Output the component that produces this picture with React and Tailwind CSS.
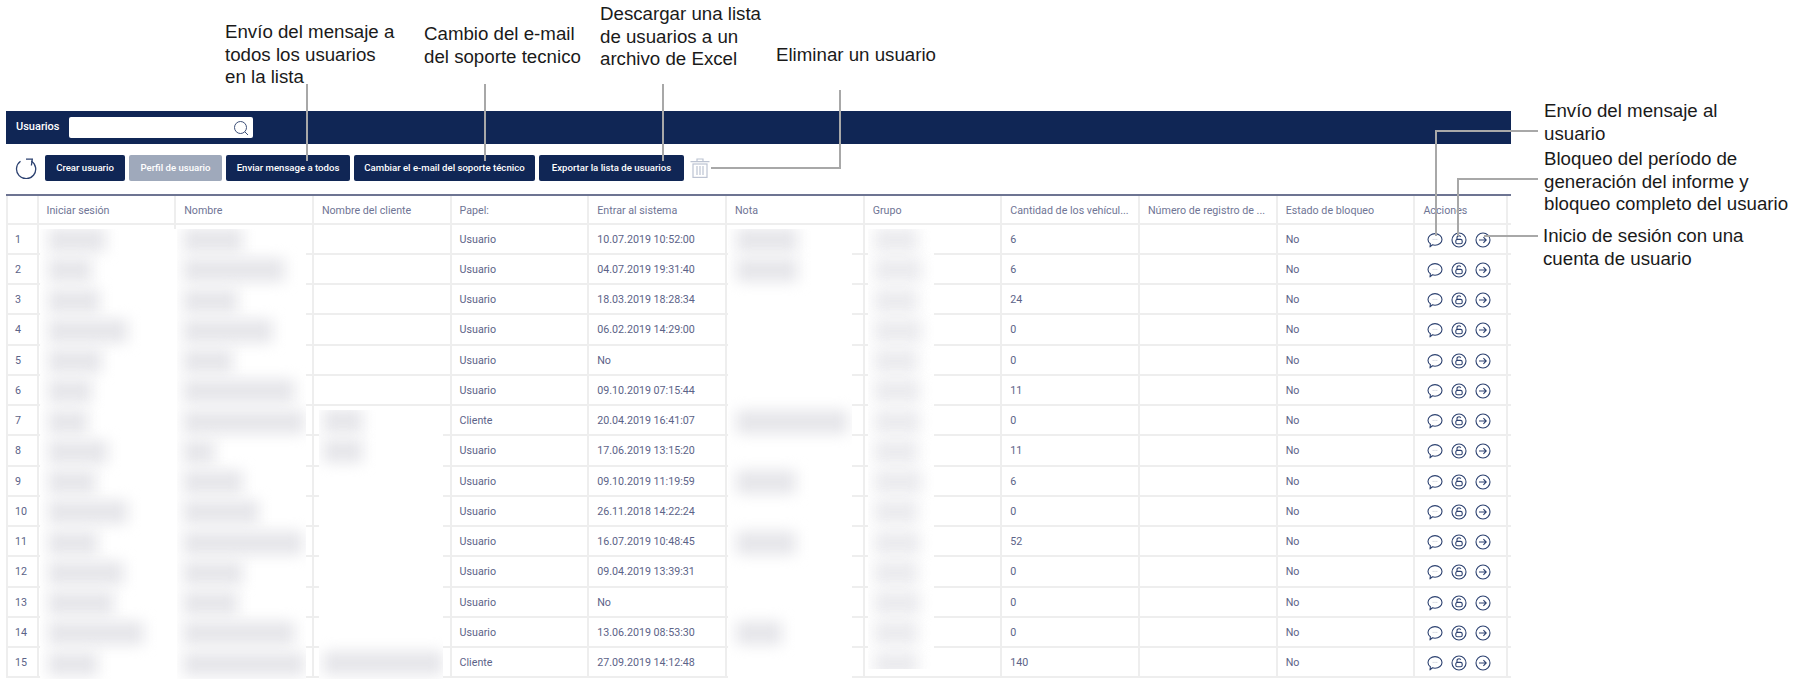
import React from "react";

const rows = [
  ["Usuario", "10.07.2019 10:52:00", "6"],
  ["Usuario", "04.07.2019 19:31:40", "6"],
  ["Usuario", "18.03.2019 18:28:34", "24"],
  ["Usuario", "06.02.2019 14:29:00", "0"],
  ["Usuario", "No", "0"],
  ["Usuario", "09.10.2019 07:15:44", "11"],
  ["Cliente", "20.04.2019 16:41:07", "0"],
  ["Usuario", "17.06.2019 13:15:20", "11"],
  ["Usuario", "09.10.2019 11:19:59", "6"],
  ["Usuario", "26.11.2018 14:22:24", "0"],
  ["Usuario", "16.07.2019 10:48:45", "52"],
  ["Usuario", "09.04.2019 13:39:31", "0"],
  ["Usuario", "No", "0"],
  ["Usuario", "13.06.2019 08:53:30", "0"],
  ["Cliente", "27.09.2019 14:12:48", "140"],
];

const headers = [
  "", "Iniciar sesión", "Nombre", "Nombre del cliente", "Papel:", "Entrar al sistema", "Nota", "Grupo",
  "Cantidad de los vehícul...", "Número de registro de ...", "Estado de bloqueo", "Acciones",
];

const gridCols = "grid grid-cols-[30.5px_repeat(10,137.7px)_92.5px]";

function ChatIcon() {
  return (
    <svg width="16" height="16" viewBox="0 0 16 16" fill="none" stroke="#2c4170" strokeWidth="1.100">
      <path d="M8 1.600c3.900 0 7 2.600 7 5.800s-3.100 5.800-7 5.800c-.9 0-1.700-.1-2.500-.4L3 14.800l.4-3C1.900 10.800 1 9.200 1 7.400 1 4.200 4.100 1.600 8 1.600z" strokeLinejoin="round" />
      <path d="M5.800 7.400h.6M7.700 7.400h.6M9.600 7.400h.6" stroke="#9aa3b8" strokeWidth="1" />
    </svg>
  );
}

function LockIcon() {
  return (
    <svg width="16" height="16" viewBox="0 0 16 16" fill="none" stroke="#2c4170" strokeWidth="1.100">
      <circle cx="8" cy="8" r="7" />
      <rect x="4.800" y="7.400" width="6.400" height="4.400" rx="1.600" />
      <path d="M6 7.400V5.600C6 4.500 6.900 3.800 8 3.800c.8 0 1.400.3 1.800.9" />
    </svg>
  );
}

function ArrowIcon() {
  return (
    <svg width="16" height="16" viewBox="0 0 16 16" fill="none" stroke="#2c4170" strokeWidth="1.100">
      <circle cx="8" cy="8" r="7" />
      <path d="M4 8h7M8.400 5.200 11.200 8l-2.800 2.800" />
    </svg>
  );
}

function SearchGlyph() {
  return (
    <svg width="16" height="16" viewBox="0 0 16 16" fill="none" stroke="#3d4f78" strokeWidth="1">
      <circle cx="7.500" cy="7.500" r="6" />
      <path d="M11.800 11.800 15 15" />
    </svg>
  );
}

function RefreshGlyph() {
  return (
    <svg width="22" height="22" viewBox="0 0 22 22" fill="none" stroke="#2c4170" strokeWidth="1.300">
      <path d="M5.500 4.300A9.600 9.600 0 1 0 16.300 4" />
      <path d="M11 2.200h6.300l-.9 6.300" />
    </svg>
  );
}

function TrashGlyph() {
  return (
    <svg width="20" height="20" viewBox="0 0 20 20" fill="none" stroke="#bcc3d2" strokeWidth="1.200">
      <path d="M0.500 3.700h19M7 3.500V1h6v2.500" />
      <rect x="3" y="6" width="14" height="13.400" />
      <path d="M7 8v9M10 8v9M13 8v9" />
    </svg>
  );
}

function Button({ children, muted }) {
  return (
    <div
      className={
        "flex h-[26px] items-center rounded-[2px] text-[9.600px] font-medium text-white " +
        (muted ? "bg-[#9fa9bb] text-[#e6e9ef]" : "bg-[#102655]")
      }
    >
      {children}
    </div>
  );
}

function Patch({ className, widths, blobLeft }) {
  return (
    <div className={"absolute overflow-hidden bg-white " + className}>
      <div className="-mt-[4px] flex flex-col">
        {widths.map((w, i) => (
          <div key={i} className="flex h-[30.250px] shrink-0 items-center">
            {w > 0 && (
              <div
                className={"h-[24px] bg-[#e6e6ea] blur-[7px] " + blobLeft}
                style={{ width: w }}
              />
            )}
          </div>
        ))}
      </div>
    </div>
  );
}

function Note({ className, children }) {
  return (
    <div
      className={
        "absolute whitespace-nowrap font-['Liberation_Sans',Arial,sans-serif] text-[18.700px] leading-[22.700px] text-[#1a1a1a] " +
        className
      }
    >
      {children}
    </div>
  );
}

function Line({ className }) {
  return <div className={"absolute bg-[#a8a8a8] " + className} />;
}

export default function App() {
  return (
    <div className="relative h-[679px] w-[1795px] overflow-hidden bg-white pl-[6px] pt-[111px] font-['Roboto',sans-serif]">
      <div className="flex h-[33px] w-[1505px] items-center gap-[9px] bg-[#102655] pl-[10px]">
        <span className="text-[11px] font-medium text-white">Usuarios</span>
        <div className="flex h-[21px] w-[184px] items-center justify-end rounded-[2px] bg-white pr-[4px]">
          <SearchGlyph />
        </div>
      </div>

      <div className="mt-[11px] flex h-[26px] items-center">
        <div className="ml-[9px] mr-[8px] flex w-[22px] justify-center">
          <RefreshGlyph />
        </div>
        <div className="flex gap-[4px]">
          <div className="w-[80px]"><Button><span className="w-full text-center">Crear usuario</span></Button></div>
          <div className="w-[93px]"><Button muted><span className="w-full text-center">Perfil de usuario</span></Button></div>
          <div className="w-[124px]"><Button><span className="w-full text-center">Enviar mensage a todos</span></Button></div>
          <div className="w-[181px]"><Button><span className="w-full text-center">Cambiar el e-mail del soporte técnico</span></Button></div>
          <div className="w-[145px]"><Button><span className="w-full text-center">Exportar la lista de usuarios</span></Button></div>
        </div>
        <div className="ml-[6px]"><TrashGlyph /></div>
      </div>

      <div className="relative mt-[13px] w-[1505px] text-[10.700px] text-[#5c6388]">
        <div className="h-[30.500px] border-b-2 border-t-2 border-b-[#eeeeee] border-t-[#6d7492]">
          <div className={gridCols + " h-full border-l-2 border-[#eeeeee]"}>
            {headers.map((h, i) => (
              <div
                key={i}
                className="flex items-center overflow-hidden whitespace-nowrap border-r-2 border-[#eeeeee] pl-[8px] pt-[3px] text-[#6f7595]"
              >
                {h}
              </div>
            ))}
          </div>
        </div>
        {rows.map((r, i) => (
          <div key={i} className={gridCols + " h-[30.250px] border-b-2 border-l-2 border-[#eeeeee]"}>
            <div className="flex items-center border-r-2 border-[#eeeeee] pl-[7px] pt-[2px]">{i + 1}</div>
            <div className="border-r-2 border-[#eeeeee]" />
            <div className="border-r-2 border-[#eeeeee]" />
            <div className="border-r-2 border-[#eeeeee]" />
            <div className="flex items-center border-r-2 border-[#eeeeee] pl-[8px] pt-[2px]">{r[0]}</div>
            <div className="flex items-center border-r-2 border-[#eeeeee] pl-[8px] pt-[2px]">{r[1]}</div>
            <div className="border-r-2 border-[#eeeeee]" />
            <div className="border-r-2 border-[#eeeeee]" />
            <div className="flex items-center border-r-2 border-[#eeeeee] pl-[8px] pt-[2px]">{r[2]}</div>
            <div className="border-r-2 border-[#eeeeee]" />
            <div className="flex items-center border-r-2 border-[#eeeeee] pl-[8px] pt-[2px]">No</div>
            <div className="flex items-center gap-[8px] border-r-2 border-[#eeeeee] pl-[12px] pt-[2px]">
              <ChatIcon />
              <LockIcon />
              <ArrowIcon />
            </div>
          </div>
        ))}

        <Patch
          className="left-[34px] top-[35px] h-[450px] w-[137px]"
          blobLeft="ml-[8px]"
          widths={[58, 44, 52, 80, 54, 44, 40, 60, 48, 80, 50, 76, 66, 96, 50]}
        />
        <Patch
          className="left-[171px] top-[35px] h-[450px] w-[129px]"
          blobLeft="ml-[6px]"
          widths={[60, 102, 55, 90, 50, 112, 122, 32, 60, 76, 120, 60, 55, 112, 122]}
        />
        <Patch
          className="left-[313px] top-[216px] h-[269px] w-[124px]"
          blobLeft="ml-[4px]"
          widths={[40, 40, 0, 0, 0, 0, 0, 0, 120]}
        />
        <Patch
          className="left-[722px] top-[35px] h-[450px] w-[124px]"
          blobLeft="ml-[8px]"
          widths={[62, 62, 0, 0, 0, 0, 112, 0, 60, 0, 60, 0, 0, 46, 0]}
        />
        <Patch
          className="left-[862px] top-[35px] h-[440px] w-[66px]"
          blobLeft="ml-[6px] opacity-80"
          widths={[44, 48, 44, 48, 44, 46, 46, 44, 48, 44, 46, 44, 46, 44, 44]}
        />
      </div>

      <Note className="left-[225px] top-[21px]">
        Envío del mensaje a<br />todos los usuarios<br />en la lista
      </Note>
      <Note className="left-[424px] top-[23px]">
        Cambio del e-mail<br />del soporte tecnico
      </Note>
      <Note className="left-[600px] top-[3px]">
        Descargar una lista<br />de usuarios a un<br />archivo de Excel
      </Note>
      <Note className="left-[776px] top-[44px]">Eliminar un usuario</Note>
      <Note className="left-[1544px] top-[100px]">
        Envío del mensaje al<br />usuario
      </Note>
      <Note className="left-[1544px] top-[148px]">
        Bloqueo del período de<br />generación del informe y<br />bloqueo completo del usuario
      </Note>
      <Note className="left-[1543px] top-[225px]">
        Inicio de sesión con una<br />cuenta de usuario
      </Note>

      <Line className="left-[306px] top-[84px] h-[77px] w-[1.500px]" />
      <Line className="left-[484px] top-[84px] h-[77px] w-[1.500px]" />
      <Line className="left-[662px] top-[84px] h-[77px] w-[1.500px]" />
      <Line className="left-[839px] top-[90px] h-[79px] w-[2px]" />
      <Line className="left-[711px] top-[167px] h-[2px] w-[130px]" />
      <Line className="left-[1435px] top-[130px] h-[106px] w-[2px]" />
      <Line className="left-[1435px] top-[130px] h-[2px] w-[103px]" />
      <Line className="left-[1457px] top-[178px] h-[58px] w-[2px]" />
      <Line className="left-[1457px] top-[178px] h-[2px] w-[81px]" />
      <Line className="left-[1484px] top-[235px] h-[2px] w-[54px]" />
    </div>
  );
}
